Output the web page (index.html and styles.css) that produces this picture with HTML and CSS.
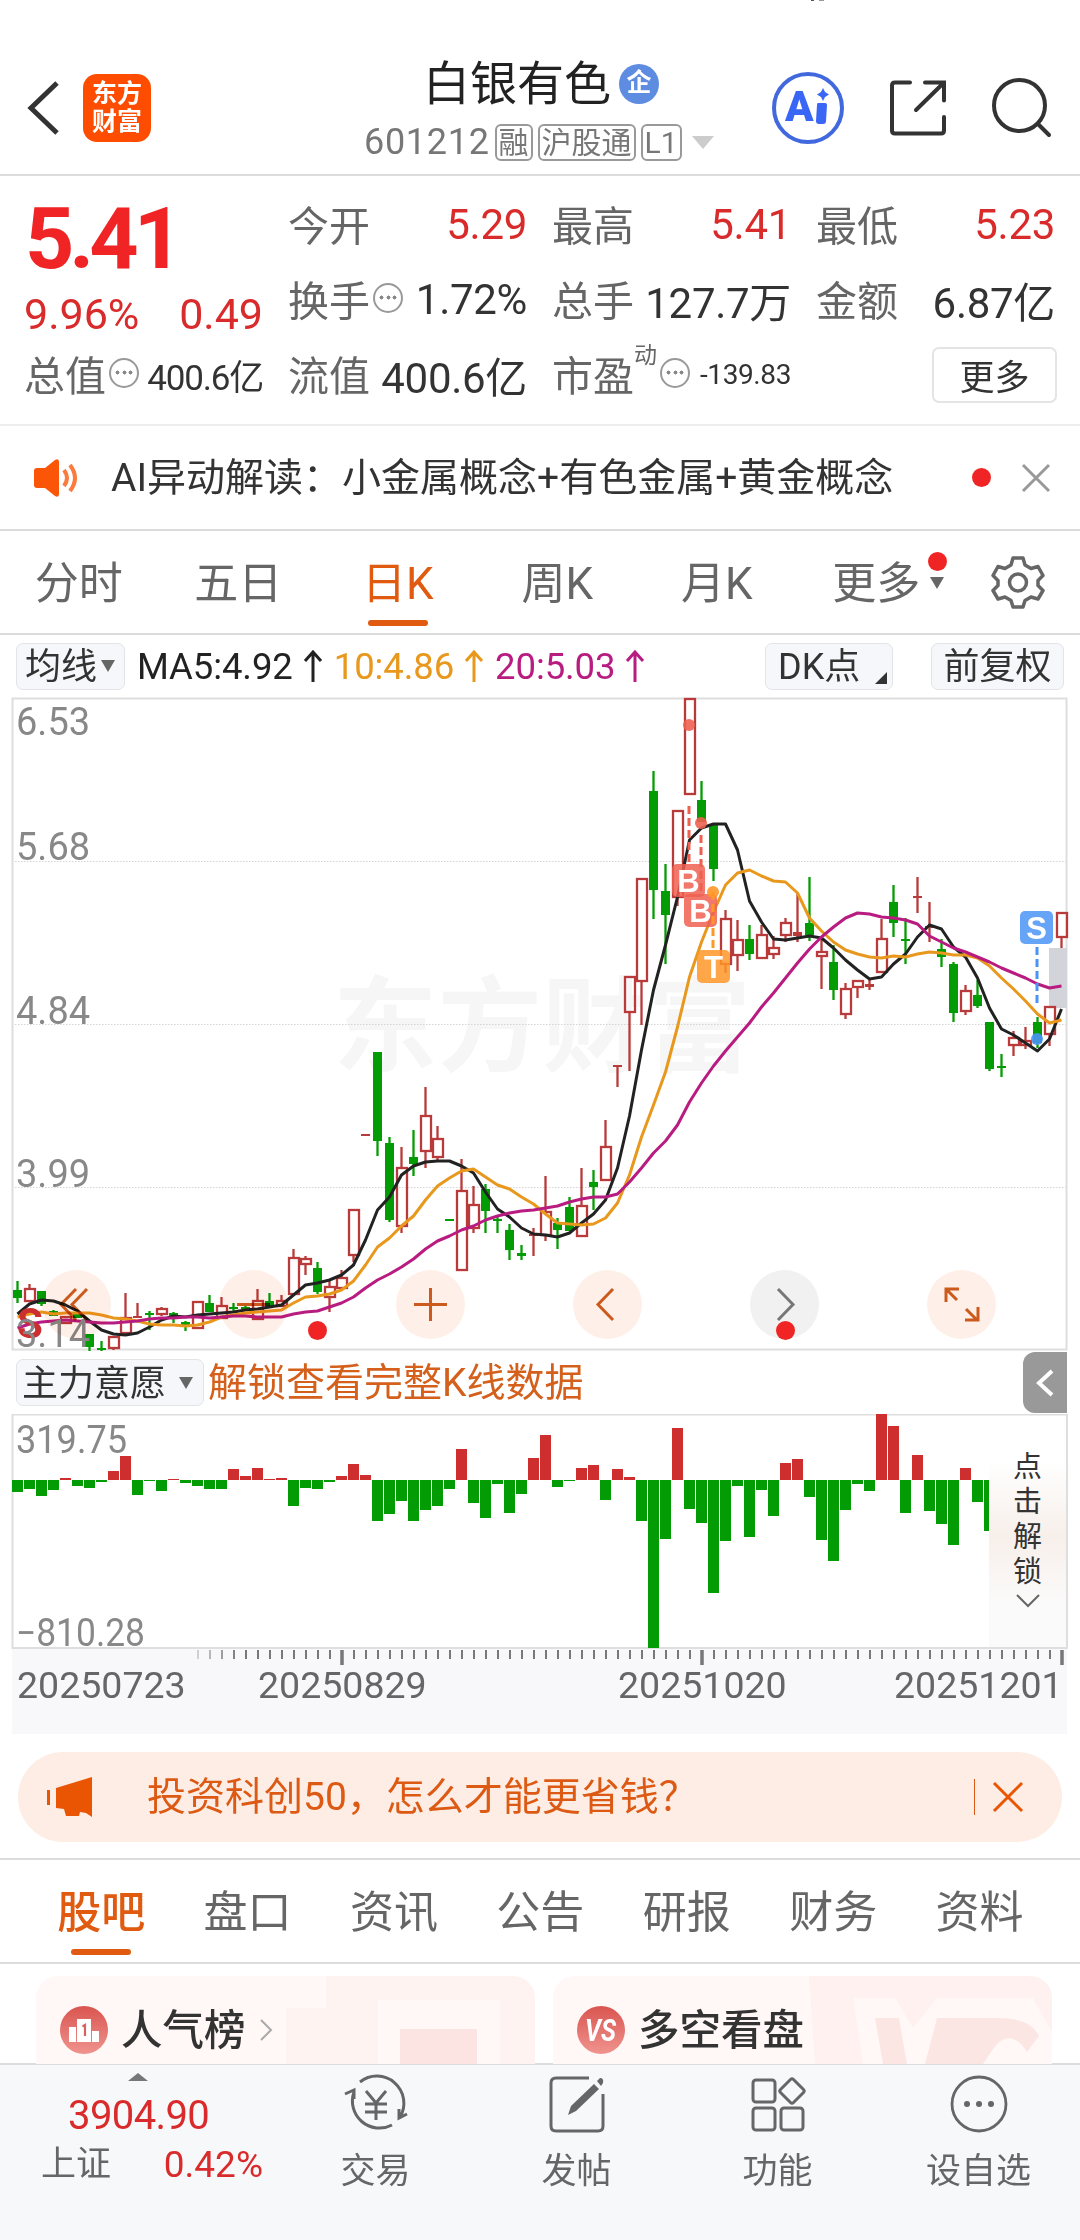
FILE: index.html
```
<!DOCTYPE html>
<html lang="zh-CN">
<head>
    <meta charset="UTF-8">
    <meta name="viewport" content="width=device-width, initial-scale=1.0">
    <title>白银有色 601212</title>
    <link rel="stylesheet" href="styles.css">
</head>
<body>

<header class="header">
    <i class="status-mark"></i>
    <div class="header-left">
        <svg width="32" height="56" viewBox="0 0 32 56"><path d="M30 3 4 28 30 53" fill="none" stroke="#333" stroke-width="5"/></svg>
        <div class="logo"><span>东方</span><span>财富</span></div>
    </div>
    <div class="header-title">
        <div class="name"><span>白银有色</span><span class="badge">企</span></div>
        <div class="code">601212<span class="tag">融</span><span class="tag">沪股通</span><span class="tag">L1</span><i class="tri tri-light"></i></div>
    </div>
    <div class="header-icons">
        <svg width="72" height="72" viewBox="0 0 72 72">
            <circle cx="36" cy="36" r="34" fill="none" stroke="#4169dd" stroke-width="4"/>
            <text x="13" y="49" class="ai-text">A</text>
            <path d="M46 31h7q2 0 2 2l-1 16q0 3-3 3h-4q-3 0-3-3l1-16q0-2 1-2z" fill="#3a66f5"/>
            <path d="M51 16l2 4 4 2.500-4 2.500-2 4-2-4-4-2.500 4-2.500z" fill="#3a66f5"/>
        </svg>
        <svg width="60" height="60" viewBox="0 0 60 60" fill="none" stroke="#333" stroke-width="4" stroke-linecap="round">
            <path d="M22 4.500H7q-3 0-3 3v45q0 3 3 3h46q3 0 3-3V39M37 4.500h19v18M55 5.500 28 32"/>
        </svg>
        <svg width="60" height="60" viewBox="0 0 60 60" fill="none" stroke="#333" stroke-width="4" stroke-linecap="round">
            <circle cx="27.500" cy="27.500" r="25.500"/><path d="M46 46 57 57"/>
        </svg>
    </div>
</header>

<section class="quote">
    <div class="quote-price">
        <div class="price">5.41</div>
        <div class="change"><span>9.96%</span><span>0.49</span></div>
    </div>
    <div class="cell"><label>今开</label><b class="up">5.29</b></div>
    <div class="cell"><label>最高</label><b class="up">5.41</b></div>
    <div class="cell"><label>最低</label><b class="up">5.23</b></div>
    <div class="cell"><label>换手<i class="info"></i></label><b>1.72%</b></div>
    <div class="cell"><label>总手</label><b>127.7万</b></div>
    <div class="cell"><label>金额</label><b>6.87亿</b></div>
    <div class="cell"><label>总值<i class="info"></i></label><b class="mid">400.6亿</b></div>
    <div class="cell"><label>流值</label><b>400.6亿</b></div>
    <div class="cell"><label>市盈<sup>动</sup><i class="info"></i></label><b class="small">-139.83</b></div>
    <div class="cell cell-more"><button class="more-btn">更多</button></div>
</section>

<section class="news">
    <svg width="46" height="40" viewBox="0 0 46 40">
        <path d="M1 13q0-3 3-3h8L22 2q4-2 4 2v32q0 4-4 2L12 30H4q-3 0-3-3z" fill="#fb5607"/>
        <path d="M31 12q6 8 0 16M37 7q10 13 0 26" fill="none" stroke="#fb7a3c" stroke-width="4"/>
    </svg>
    <p>AI异动解读：小金属概念+有色金属+黄金概念</p>
    <i class="dot"></i>
    <svg width="30" height="30" viewBox="0 0 30 30"><path d="M2 2 28 28M28 2 2 28" stroke="#999" stroke-width="3"/></svg>
</section>

<nav class="tabs">
    <a>分时</a>
    <a>五日</a>
    <a class="active">日K</a>
    <a>周K</a>
    <a>月K</a>
    <a class="tab-more">更多<span class="tab-mark"><i class="dot"></i><i class="tri"></i></span></a>
    <svg width="54" height="54" viewBox="0 0 54 54" fill="none" stroke="#666" stroke-width="3.500" stroke-linejoin="round">
        <path d="M22 3h10l2 7 6 3.500 7-2 5 9-5 5v5l5 5-5 8.500-7-2-6 3.500-2 6.500H22l-2-6.500-6-3.500-7 2-5-8.500 5-5v-5l-5-5 5-9 7 2 6-3.500z"/>
        <circle cx="27" cy="27.500" r="8.500"/>
    </svg>
</nav>

<div class="ma-bar">
    <button class="chip chip-ma">均线<i class="tri"></i></button>
    <span class="ma ma5">MA5:4.92<svg width="20" height="32" viewBox="0 0 20 32"><path d="M10 32V2M2 11l8-9 8 9"/></svg></span>
    <span class="ma ma10">10:4.86<svg width="20" height="32" viewBox="0 0 20 32"><path d="M10 32V2M2 11l8-9 8 9"/></svg></span>
    <span class="ma ma20">20:5.03<svg width="20" height="32" viewBox="0 0 20 32"><path d="M10 32V2M2 11l8-9 8 9"/></svg></span>
    <button class="chip chip-dk">DK点<i class="corner"></i></button>
    <button class="chip chip-fq">前复权</button>
</div>

<div class="kline">
    <svg id="kline" width="1080" height="654" viewBox="0 697 1080 654">
        <text x="333" y="1064" class="watermark" textLength="418">东方财富</text>
        <g id="grid"></g>
        <rect x="12.500" y="698.500" width="1054" height="651" class="frame"/>
        <rect x="1049" y="948" width="18" height="60" fill="#d2d4da"/>
        <g id="candles"></g>
        <g id="lines"></g>
        <g id="marks"></g>
        <text x="17" y="1338" class="s-mark">S</text>
        <text x="16" y="735" class="axis">6.53</text>
        <text x="16" y="860" class="axis">5.68</text>
        <text x="16" y="1024" class="axis">4.84</text>
        <text x="16" y="1187" class="axis">3.99</text>
        <text x="16" y="1347" class="axis">3.14</text>
    </svg>
    <div class="chart-tools">
        <span class="tool"><svg viewBox="0 0 69 69"><path d="M34 19 19 34.500 34 50M45 19 30 34.500 45 50"/></svg></span>
        <span class="tool"><svg viewBox="0 0 69 69"><path d="M18 34.500h33"/></svg><i class="dot dot-out"></i></span>
        <span class="tool"><svg viewBox="0 0 69 69"><path d="M18 34.500h33M34.500 18v33"/></svg></span>
        <span class="tool"><svg viewBox="0 0 69 69"><path d="M40 19 25 34.500 40 50"/></svg></span>
        <span class="tool tool-off"><svg viewBox="0 0 69 69"><path d="M28 19 43 34.500 28 50"/></svg><i class="dot dot-in"></i></span>
        <span class="tool"><svg viewBox="0 0 69 69"><path d="M19 32V19h13M19 19l11 11M51 37v13H38M50 50 39 39"/></svg></span>
    </div>
</div>

<div class="sub-bar">
    <button class="chip chip-main">主力意愿<i class="tri"></i></button>
    <span class="unlock-tip">解锁查看完整K线数据</span>
    <span class="drawer"><svg width="20" height="30" viewBox="0 0 20 30"><path d="M17 3 4 15l13 12" fill="none" stroke="#fff" stroke-width="4"/></svg></span>
</div>

<div class="volume">
    <svg id="volume" width="1080" height="320" viewBox="0 1414 1080 320">
        <rect x="12" y="1649" width="1055" height="85" fill="#f8f8fa"/>
        <path d="M12.500 1648V1414.500H1067V1648z" class="frame"/>
        <g id="bars"></g>
        <g id="ticks"></g>
        <text x="16" y="1453" class="axis" textLength="111" lengthAdjust="spacingAndGlyphs">319.75</text>
        <text x="16" y="1646" class="axis" textLength="129" lengthAdjust="spacingAndGlyphs">−810.28</text>
        <text x="17" y="1698" class="date">20250723</text>
        <text x="258" y="1698" class="date">20250829</text>
        <text x="618" y="1698" class="date">20251020</text>
        <text x="894" y="1698" class="date">20251201</text>
    </svg>
    <div class="unlock">
        <span>点击解锁</span>
        <svg width="24" height="14" viewBox="0 0 24 14"><path d="M1 1l11 11L23 1" fill="none" stroke="#666" stroke-width="2"/></svg>
    </div>
</div>

<div class="banner">
    <svg width="48" height="42" viewBox="0 0 48 42" fill="#ea5504">
        <path d="M1 14h3v15H1zM10 12 46 1v40l-6-4-6-1-1 4H20l-2-7-8-1z"/>
    </svg>
    <p>投资科创50，怎么才能更省钱？</p>
    <i class="line"></i>
    <svg width="32" height="32" viewBox="0 0 32 32"><path d="M2 2 30 30M30 2 2 30" stroke="#ea5504" stroke-width="3"/></svg>
</div>

<nav class="tabs tabs-info">
    <a class="active">股吧</a>
    <a>盘口</a>
    <a>资讯</a>
    <a>公告</a>
    <a>研报</a>
    <a>财务</a>
    <a>资料</a>
</nav>

<section class="cards">
    <div class="card">
        <svg class="card-bg" width="499" height="88" viewBox="0 0 499 88">
            <path d="M290 0h209v88H250V32h40z" fill="#fef3f1"/>
            <path d="M342 24h122v64H342z" fill="#fff8f6"/>
            <path d="M364 53h77v35h-77z" fill="#fce4e2"/>
        </svg>
        <svg width="48" height="48" viewBox="0 0 48 48">
            <defs><linearGradient id="rg" x1="0" y1="0" x2="0" y2="1"><stop offset="0" stop-color="#d95550"/><stop offset="1" stop-color="#f0938e"/></linearGradient></defs>
            <circle cx="24" cy="24" r="24" fill="url(#rg)"/>
            <path d="M9 21h7v15H9zM17 13h14v23H17zM32 25h7v11h-7z" fill="#fff"/>
            <path d="M22.500 20.500 25 19v11" fill="none" stroke="#d9625d" stroke-width="2.200"/>
        </svg>
        <b>人气榜</b>
        <svg width="14" height="24" viewBox="0 0 14 24"><path d="M2 2l10 10L2 22" fill="none" stroke="#aaa" stroke-width="2"/></svg>
    </div>
    <div class="card">
        <svg class="card-bg" width="499" height="88" viewBox="0 0 499 88">
            <path d="M256 0h243v88H262z" fill="#fef1ef"/>
            <path d="M300 22h42l18 30 24-30h96l19 34v32H310z" fill="#fff8f6"/>
            <path d="M322 42h24l8 46h-24zM384 42h60q34 0 42 18l-12 16q-18-28-36 0l-8 12h-58z" fill="#fce6e4"/>
        </svg>
        <svg width="48" height="48" viewBox="0 0 48 48">
            <circle cx="24" cy="24" r="24" fill="url(#rg)"/>
            <text x="8" y="35" class="vs" textLength="31" lengthAdjust="spacingAndGlyphs">VS</text>
        </svg>
        <b>多空看盘</b>
    </div>
</section>

<footer class="bottom">
    <div class="index">
        <i class="tri-up"></i>
        <div class="index-num">3904.90</div>
        <div class="index-row"><span>上证</span><span class="up">0.42%</span></div>
    </div>
    <div class="nav-item">
        <svg width="66" height="60" viewBox="0 0 66 60" fill="none" stroke="#666" stroke-width="3">
            <path d="M17 8A27 27 0 0 1 57 43M49 51A27 27 0 0 1 11 18M2 20l9-4v9M64 40l-8 4v-9"/>
            <path d="M23 17l10 12 10-12M33 29v17M22 30h22M22 38h22"/>
        </svg>
        <span>交易</span>
    </div>
    <div class="nav-item">
        <svg width="60" height="60" viewBox="0 0 60 60" fill="none" stroke="#666" stroke-width="3">
            <path d="M42 4H9Q4 4 4 9v43q0 5 5 5h42q5 0 5-5V20"/>
            <path d="M47 10l5 5L29 37l-8 4 3-9zM50 7l3-3q4 0 3 5l-2 3z" fill="#666" stroke="none"/>
        </svg>
        <span>发帖</span>
    </div>
    <div class="nav-item">
        <svg width="60" height="60" viewBox="0 0 60 60" fill="none" stroke="#666" stroke-width="3">
            <rect x="5" y="6" width="22" height="22" rx="3"/>
            <rect x="5" y="34" width="22" height="22" rx="3"/>
            <rect x="33" y="34" width="22" height="22" rx="3"/>
            <path d="M42.500 5.500q1.500-1.500 3 0l10 10q1.500 1.500 0 3l-10 10q-1.500 1.500-3 0l-10-10q-1.500-1.500 0-3z"/>
        </svg>
        <span>功能</span>
    </div>
    <div class="nav-item">
        <svg width="60" height="60" viewBox="0 0 60 60">
            <circle cx="30" cy="30" r="27" fill="none" stroke="#666" stroke-width="2.800"/>
            <circle cx="18" cy="30" r="3" fill="#666"/><circle cx="30" cy="30" r="3" fill="#666"/><circle cx="42" cy="30" r="3" fill="#666"/>
        </svg>
        <span>设自选</span>
    </div>
</footer>

<script src="chart.js"></script>
</body>
</html>
```
FILE: styles.css
```
* {
    box-sizing: border-box;
}

body {
    margin: 0;
    width: 1080px;
    height: 2240px;
    overflow: hidden;
    background: #fff;
    color: #333;
    font-family: Roboto, "Noto Sans CJK SC", sans-serif;
}

svg {
    display: block;
    flex: none;
}

p {
    margin: 0;
}

button {
    font-family: inherit;
    color: #333;
    padding: 0;
}

.up {
    color: #d92b2b !important;
}

.dot {
    display: block;
    width: 19px;
    height: 19px;
    border-radius: 50%;
    background: #f02424;
    flex: none;
}

.tri {
    display: block;
    border: 7px solid transparent;
    border-top: 12px solid #666;
    border-bottom: 0;
}

/* header */
.header {
    position: relative;
    height: 176px;
    padding: 42px 28px 0 27px;
    display: flex;
    align-items: center;
    border-bottom: 2px solid #dcdcdc;
}

.status-mark {
    position: absolute;
    left: 811px;
    top: 0;
    width: 13px;
    height: 1px;
    border-left: 3px solid #555;
    border-right: 5px solid #999;
}

.header-left {
    display: flex;
    align-items: center;
    gap: 24px;
    width: 337px;
}

.logo {
    width: 68px;
    height: 68px;
    border-radius: 14px;
    background: #fe4d01;
    color: #fff;
    font-size: 25px;
    font-weight: 700;
    line-height: 28px;
    display: flex;
    flex-direction: column;
    align-items: center;
    justify-content: center;
}

.header-title {
    width: 350px;
    margin-top: 2px;
}

.name {
    display: flex;
    align-items: center;
    justify-content: center;
    gap: 8px;
    height: 66px;
    font-size: 47px;
    color: #222;
    margin-left: 4px;
    white-space: nowrap;
}

.name > span:first-child {
    padding-bottom: 4px;
}

.badge {
    width: 40px;
    height: 40px;
    margin-top: 5px;
    border-radius: 50%;
    background: #5e8ce0;
    color: #fff;
    font-size: 25px;
    font-weight: 700;
    line-height: 38px;
    text-align: center;
}

.code {
    display: flex;
    align-items: center;
    height: 56px;
    font-size: 36px;
    color: #777;
    letter-spacing: .7px;
    white-space: nowrap;
}

.tag {
    flex: none;
    height: 37px;
    margin-left: 5px;
    padding: 0 2px;
    border: 2px solid #999;
    border-radius: 6px;
    font-size: 30px;
    line-height: 33px;
    letter-spacing: 0;
}

.tri-light {
    border-width: 13px 11px 0;
    border-color: #ccc transparent transparent;
    margin-left: 10px;
}

.header-icons {
    display: flex;
    align-items: center;
    gap: 44px;
    margin-left: auto;
}

.ai-text {
    font: 900 42px Roboto, sans-serif;
    fill: #3a66f5;
}

/* quote */
.quote {
    height: 250px;
    padding: 12px 25px 0;
    display: grid;
    grid-template-columns: repeat(4, 238px);
    grid-template-rows: repeat(3, 75px);
    column-gap: 26px;
    border-bottom: 2px solid #eee;
}

.quote-price {
    grid-row: span 2;
}

.price {
    height: 101px;
    line-height: 101px;
    font-size: 86px;
    font-weight: 700;
    color: #f02424;
    letter-spacing: -5px;
}

.change {
    display: flex;
    justify-content: space-between;
    height: 50px;
    line-height: 50px;
    font-size: 43px;
    color: #d92b2b;
    margin-left: -1px;
}

.cell {
    display: flex;
    align-items: center;
    justify-content: space-between;
    white-space: nowrap;
}

.cell label {
    display: flex;
    align-items: center;
    margin-left: -1px;
    padding-bottom: 6px;
    font-size: 41px;
    color: #666;
}

.cell b {
    font-size: 42px;
    font-weight: 400;
    letter-spacing: -.3px;
    padding-bottom: 2px;
}

.cell .mid {
    font-size: 35px;
    letter-spacing: -1.2px;
}

.cell .small {
    font-size: 28px;
    letter-spacing: -.4px;
}

.cell sup {
    font-size: 23px;
    line-height: 23px;
    margin-top: -34px;
}

.info {
    width: 30px;
    height: 30px;
    margin-left: 3px;
    border: 2px solid #999;
    border-radius: 50%;
    background: radial-gradient(circle, #888 1.8px, transparent 2.2px) 50% 50% / 7px 7px no-repeat,
        radial-gradient(circle, #888 1.8px, transparent 2.2px) 15% 50% / 7px 7px no-repeat,
        radial-gradient(circle, #888 1.8px, transparent 2.2px) 85% 50% / 7px 7px no-repeat;
}

.cell-more {
    justify-content: flex-end;
}

.more-btn {
    width: 125px;
    height: 56px;
    margin: 0 -2px 2px 0;
    padding-bottom: 7px;
    border: 2px solid #e4e4e4;
    border-radius: 7px;
    background: #fff;
    font-size: 35px;
}

/* news */
.news {
    display: flex;
    align-items: center;
    height: 105px;
    padding: 0 29px 0 33px;
    border-bottom: 2px solid #dcdcdc;
}

.news p {
    flex: 1;
    margin-left: 32px;
    padding-bottom: 8px;
    font-size: 39px;
}

.news .dot {
    margin-right: 30px;
}

/* tabs */
.tabs {
    display: flex;
    align-items: center;
    height: 104px;
    border-bottom: 2px solid #dcdcdc;
}

.tabs a {
    position: relative;
    width: 159.5px;
    height: 102px;
    line-height: 106px;
    font-size: 44px;
    color: #666;
    text-align: center;
    left: -1px;
}

.tabs a.active {
    color: #e05a10;
}

.tabs a.active::after {
    content: "";
    position: absolute;
    left: 50%;
    bottom: 7px;
    width: 60px;
    height: 6px;
    margin-left: -30px;
    border-radius: 3px;
    background: #e05a10;
}

.tabs svg {
    margin-left: 34px;
}

.tab-mark {
    position: absolute;
    left: 131px;
    top: 21px;
    display: flex;
    flex-direction: column;
    align-items: center;
    gap: 6px;
}

.tabs-info {
    padding: 0 28px;
    border-top: 2px solid #dcdcdc;
    height: 106px;
}

.tabs-info a {
    width: 146.4px;
    flex: none;
    left: 0;
}

.tabs-info a.active {
    font-weight: 500;
}

/* moving average row */
.ma-bar {
    display: flex;
    align-items: center;
    height: 62px;
    padding: 0 16px;
}

.chip {
    display: flex;
    align-items: center;
    height: 47px;
    padding-bottom: 6px;
    border: 1.5px solid #e3e4e8;
    border-radius: 7px;
    background: #f6f7fa;
    font-size: 36px;
    white-space: nowrap;
}

.chip .tri {
    position: relative;
    top: 3px;
}

.chip-ma {
    width: 109px;
    padding-left: 8px;
    gap: 4px;
}

.chip-dk {
    position: relative;
    width: 128px;
    padding-left: 12px;
    margin-left: auto;
    margin-right: 38px;
}

.chip-fq {
    width: 133px;
    justify-content: center;
}

.corner {
    position: absolute;
    right: 5px;
    bottom: 5px;
    border-left: 12px solid transparent;
    border-bottom: 12px solid #333;
}

.ma {
    display: flex;
    align-items: center;
    gap: 10px;
    margin-left: 11px;
    font-size: 36.500px;
    letter-spacing: -.1px;
    color: #222;
}

.ma5 {
    margin-left: 12px;
}

.ma svg {
    fill: none;
    stroke: currentColor;
    stroke-width: 3;
}

.ma10 {
    color: #e8981c;
}

.ma20 {
    color: #b81c80;
}

/* k line */
.kline {
    position: relative;
}

.kline svg {
    overflow: visible;
}

.frame {
    fill: none;
    stroke: #dedede;
    stroke-width: 2;
}

.watermark {
    font-size: 104px;
    font-weight: 700;
    fill: #f6f6f6;
}

.axis {
    font-size: 38px;
    fill: #888;
}

.date {
    font-size: 37.500px;
    fill: #666;
}

.s-mark {
    font-size: 42px;
    font-weight: 700;
    fill: #cc2f2f;
}

.mark-text {
    font: 700 31px "Liberation Sans", sans-serif;
    fill: #fff;
    text-anchor: middle;
}

.chart-tools {
    position: absolute;
    left: 42px;
    bottom: 12px;
    display: flex;
    gap: 108px;
    mix-blend-mode: multiply;
}

.tool {
    position: relative;
    width: 69px;
    height: 69px;
    border-radius: 50%;
    background: #fef0e9;
}

.tool svg {
    fill: none;
    stroke: #cc5a1c;
    stroke-width: 3;
}

.tool-off {
    background: #f1f1f1;
}

.tool-off svg {
    stroke: #777;
}

.tool .dot {
    position: absolute;
}

.dot-out {
    left: 89px;
    top: 51px;
}

.dot-in {
    left: 26px;
    top: 51px;
}

/* sub chart */
.sub-bar {
    display: flex;
    align-items: center;
    height: 63px;
    padding: 0 13px 0 16px;
}

.chip-main {
    width: 188px;
    padding-left: 5px;
    gap: 13px;
}

.unlock-tip {
    flex: 1;
    margin-left: 4px;
    padding-bottom: 7px;
    font-size: 39px;
    color: #d4601c;
}

.drawer {
    display: flex;
    align-items: center;
    justify-content: center;
    width: 44px;
    height: 61px;
    border-radius: 12px 0 0 12px;
    background: #999;
}

.volume {
    position: relative;
    height: 320px;
}

.unlock {
    position: absolute;
    left: 989px;
    top: 2px;
    width: 77px;
    height: 231px;
    padding-top: 34px;
    display: flex;
    flex-direction: column;
    align-items: center;
    background: linear-gradient(#fff 20%, #f7efea 52%, #fbfafa 80%);
    color: #333;
    font-size: 29px;
}

.unlock span {
    width: 29px;
    line-height: 35px;
    word-break: break-all;
}

.unlock svg {
    margin-top: 4px;
}

/* banner */
.banner {
    display: flex;
    align-items: center;
    height: 90px;
    margin: 18px 18px 16px;
    padding: 0 38px 0 28px;
    border-radius: 45px;
    background: #fdede4;
    color: #dc5a14;
}

.banner p {
    flex: 1;
    margin-left: 53px;
    padding-bottom: 8px;
    font-size: 39px;
}

.banner .line {
    width: 1px;
    height: 36px;
    margin-right: 17px;
    background: #dc5a14;
}

/* cards */
.cards {
    display: flex;
    gap: 18px;
    height: 99px;
    padding: 12px 27px 0 36px;
}

.card {
    position: relative;
    display: flex;
    align-items: center;
    width: 499px;
    height: 88px;
    padding: 20px 0 0 24px;
    border-radius: 22px 22px 0 0;
    background: #fff8f6;
    overflow: hidden;
}

.card > * {
    position: relative;
}

.card .card-bg {
    position: absolute;
    left: 0;
    top: 0;
}

.card b {
    margin: 0 13px;
    padding-bottom: 6px;
    font-size: 41.500px;
    font-weight: 500;
}

.vs {
    font: italic 700 31px Roboto, sans-serif;
    fill: #fff;
}

/* bottom bar */
.bottom {
    display: flex;
    height: 177px;
    background: #f7f8fa;
    border-top: 2px solid #dcdcdc;
    color: #666;
    font-size: 35px;
}

.index {
    width: 275px;
}

.tri-up {
    display: block;
    width: 0;
    margin: 8px 0 0 128px;
    border: 10px solid transparent;
    border-top: 0;
    border-bottom: 8px solid #777;
}

.index-num {
    margin: 10px 0 0 68px;
    height: 50px;
    line-height: 50px;
    font-size: 40px;
    letter-spacing: -.6px;
    color: #d92b2b;
}

.index-row {
    display: flex;
    justify-content: space-between;
    padding: 0 12px 0 41px;
    height: 48px;
    line-height: 48px;
}

.index-row .up {
    font-size: 37px;
}

.nav-item {
    width: 201px;
    padding-top: 9px;
    display: flex;
    flex-direction: column;
    align-items: center;
    gap: 14px;
}

.nav-item span {
    line-height: 48px;
}
```
FILE: chart.js
```
const UP = '#b93a3a';
const DOWN = '#049c04';
const STEP = 12;
const X0 = 17.5;

function add(id, html) {
    document.getElementById(id).innerHTML += html;
}

// high, body top, body bottom, low, color (r = hollow, f = filled red, g = green)
const candles = [
    [1281, 1290, 1298, 1303, 'g'], [1284, 1289, 1301, 1301, 'r'], [1291, 1291, 1304, 1306, 'g'],
    [1310, 1311, 1316, 1316, 'g'], [1317, 1317, 1323, 1323, 'r'], [1312, 1313, 1318, 1318, 'g'],
    [1334, 1334, 1347, 1351, 'g'], [1341, 1348, 1349, 1351, 'g'], [1337, 1337, 1348, 1350, 'r'],
    [1293, 1318, 1333, 1333, 'r'], [1303, 1316, 1317, 1317, 'r'], [1311, 1313, 1314, 1330, 'g'],
    [1307, 1309, 1314, 1316, 'r'], [1312, 1313, 1317, 1323, 'g'], [1321, 1322, 1326, 1331, 'g'],
    [1302, 1302, 1328, 1328, 'r'], [1295, 1303, 1312, 1312, 'g'], [1297, 1306, 1318, 1318, 'r'],
    [1303, 1307, 1308, 1311, 'g'], [1306, 1307, 1309, 1310, 'g'], [1289, 1301, 1319, 1320, 'r'],
    [1293, 1301, 1307, 1307, 'g'], [1295, 1301, 1306, 1306, 'r'], [1249, 1258, 1294, 1294, 'r'],
    [1256, 1259, 1264, 1275, 'r'], [1262, 1268, 1292, 1294, 'g'], [1281, 1287, 1297, 1312, 'r'],
    [1270, 1278, 1288, 1288, 'r'], [1210, 1210, 1255, 1262, 'r'], [1134, 1134, 1135, 1135, 'r'],
    [1052, 1052, 1141, 1156, 'g'], [1137, 1143, 1220, 1222, 'g'], [1147, 1168, 1226, 1233, 'r'],
    [1130, 1157, 1164, 1176, 'g'], [1087, 1116, 1151, 1168, 'r'], [1126, 1139, 1157, 1160, 'r'],
    [1219, 1219, 1220, 1220, 'g'], [1159, 1191, 1270, 1270, 'r'], [1186, 1205, 1228, 1233, 'r'],
    [1184, 1189, 1211, 1233, 'g'], [1217, 1219, 1220, 1233, 'g'], [1224, 1230, 1250, 1260, 'g'],
    [1245, 1253, 1256, 1260, 'g'], [1228, 1234, 1235, 1256, 'r'], [1176, 1212, 1235, 1241, 'r'],
    [1218, 1223, 1230, 1249, 'g'], [1197, 1207, 1231, 1231, 'g'], [1168, 1206, 1236, 1236, 'r'],
    [1170, 1182, 1187, 1210, 'g'], [1120, 1147, 1180, 1180, 'r'], [1065, 1065, 1066, 1087, 'r'],
    [977, 977, 1012, 1071, 'r'], [879, 879, 981, 1025, 'r'], [771, 791, 890, 919, 'g'],
    [864, 891, 915, 964, 'g'], [811, 811, 897, 906, 'r'], [699, 699, 794, 794, 'r'],
    [781, 800, 822, 822, 'g'], [824, 824, 869, 881, 'g'], [910, 919, 964, 973, 'r'],
    [920, 940, 955, 971, 'r'], [925, 939, 954, 960, 'g'], [925, 935, 958, 959, 'r'],
    [936, 948, 954, 959, 'r'], [918, 923, 935, 942, 'r'], [893, 932, 936, 942, 'f'],
    [877, 923, 935, 941, 'g'], [938, 952, 956, 989, 'r'], [945, 962, 990, 1000, 'g'],
    [983, 989, 1014, 1019, 'r'], [981, 981, 987, 998, 'r'], [980, 984, 987, 990, 'f'],
    [919, 939, 972, 972, 'r'], [885, 902, 923, 937, 'g'], [918, 939, 940, 964, 'g'],
    [877, 896, 897, 913, 'r'], [902, 926, 927, 942, 'r'], [939, 949, 957, 967, 'g'],
    [962, 964, 1013, 1022, 'g'], [985, 991, 1011, 1015, 'r'], [980, 995, 1006, 1008, 'g'],
    [1022, 1022, 1069, 1071, 'g'], [1054, 1066, 1067, 1077, 'g'], [1031, 1038, 1045, 1056, 'r'],
    [1027, 1041, 1045, 1049, 'r'], [1017, 1022, 1043, 1048, 'g'], [1007, 1007, 1034, 1046, 'r'],
    [913, 913, 937, 948, 'r']
];

let out = '';
candles.forEach(([high, top, bottom, low, type], i) => {
    const x = X0 + i * STEP;
    const color = type === 'g' ? DOWN : UP;
    if (high < top) out += `<path d="M${x} ${high}V${top}" stroke="${color}" stroke-width="2.3"/>`;
    if (low > bottom) out += `<path d="M${x} ${bottom}V${low}" stroke="${color}" stroke-width="2.3"/>`;
    if (bottom - top <= 1) {
        out += `<rect x="${x - 4.5}" y="${top}" width="9" height="2" fill="${color}"/>`;
    } else if (type === 'r') {
        out += `<rect x="${x - 4.5}" y="${top}" width="10" height="${bottom - top}" fill="none" stroke="${color}" stroke-width="2.3"/>`;
    } else {
        out += `<rect x="${x - 4.5}" y="${top}" width="9" height="${bottom - top}" fill="${color}"/>`;
    }
});
add('candles', out);

// dotted price levels
[861, 1024, 1187].forEach(y => {
    add('grid', `<path d="M12 ${y}.5H1067" stroke="#d4d4d4" stroke-dasharray="1.5 1.5"/>`);
});

// averages, one y per day
const averages = {
    '#222': [1314, 1304, 1300, 1301, 1305, 1311, 1321, 1330, 1334, 1335, 1333, 1327, 1320, 1316, 1317, 1315, 1314, 1313, 1312, 1310, 1309, 1307, 1305, 1295, 1285, 1283, 1280, 1275, 1265, 1240, 1210, 1197, 1175, 1166, 1162, 1161, 1161, 1166, 1173, 1192, 1209, 1217, 1228, 1234, 1235, 1237, 1233, 1223, 1214, 1200, 1168, 1116, 1050, 990, 945, 897, 840, 828, 824, 824, 850, 901, 922, 939, 940, 938, 936, 938, 948, 960, 970, 979, 977, 964, 954, 937, 925, 929, 947, 957, 978, 1008, 1029, 1035, 1043, 1051, 1039, 1009],
    '#e8981c': [1317, 1314, 1312, 1314, 1313, 1313, 1313, 1315, 1318, 1319, 1321, 1324, 1325, 1325, 1326, 1325, 1322, 1317, 1315, 1313, 1312, 1311, 1310, 1303, 1297, 1296, 1294, 1290, 1281, 1265, 1247, 1238, 1226, 1216, 1200, 1186, 1178, 1171, 1169, 1177, 1185, 1189, 1197, 1204, 1214, 1223, 1224, 1225, 1224, 1218, 1203, 1175, 1137, 1105, 1072, 1027, 977, 942, 912, 885, 873, 870, 876, 881, 882, 893, 918, 931, 942, 950, 954, 957, 958, 956, 957, 954, 952, 953, 955, 955, 958, 966, 978, 989, 1001, 1014, 1023, 1020],
    '#b81c80': [1328, 1324, 1322, 1321, 1320, 1321, 1322, 1323, 1323, 1322, 1321, 1319, 1318, 1318, 1317, 1317, 1318, 1317, 1316, 1316, 1317, 1317, 1317, 1314, 1312, 1311, 1307, 1303, 1297, 1288, 1280, 1274, 1267, 1259, 1249, 1241, 1236, 1230, 1226, 1220, 1216, 1213, 1211, 1210, 1208, 1206, 1202, 1199, 1197, 1197, 1194, 1182, 1168, 1153, 1141, 1125, 1102, 1083, 1066, 1051, 1037, 1023, 1007, 993, 978, 963, 949, 937, 927, 918, 913, 914, 917, 918, 920, 924, 936, 942, 948, 952, 957, 962, 968, 973, 978, 984, 988, 986]
};
for (const color in averages) {
    const points = averages[color].map((y, i) => `${X0 + i * STEP},${y}`).join(' ');
    add('lines', `<polyline points="${points}" fill="none" stroke="${color}" stroke-width="3" stroke-linejoin="round"/>`);
}

// trade marks: dot, dashed link, label box
function mark(x, dotY, from, to, boxX, boxY, letter, color) {
    add('marks', `<circle cx="${x}" cy="${dotY}" r="6" fill="${color}" opacity=".9"/>
        <path d="M${x} ${from}V${to}" stroke="${color}" stroke-width="3" stroke-dasharray="8 4"/>
        <rect x="${boxX}" y="${boxY}" width="33" height="33" rx="5" fill="${color}" opacity=".85"/>
        <text x="${boxX + 16.5}" y="${boxY + 28}" class="mark-text">${letter}</text>`);
}
mark(689, 725, 806, 864, 672, 864, 'B', '#ee6050');
mark(701, 823, 835, 893, 684, 894, 'B', '#ee6050');
mark(713, 892, 892, 950, 697, 950, 'T', '#ff9628');
mark(1037, 1039, 947, 1004, 1020, 911, 'S', '#4a94f6');

// main force bars, positive is up
const bars = [-12, -9, -16, -10, 2, -6, -8, -2, 9, 24, -15, -1, -11, 1, -3, -6, -9, -9, 11, 4, 12, 1, 2, -26, -8, -9, -2, 4, 16, 5,
    -41, -34, -21, -41, -30, -26, -9, 31, -23, -38, -4, -33, -14, 22, 45, -7, -1, 12, 15, -20, 11, 3, -41, -168, -59, 52, -29, -43, -113, -61,
    -6, -57, -10, -36, 17, 21, -17, -60, -81, -30, -4, -11, 66, 54, -33, 25, -31, -44, -65, 12, -22, -51];
out = '';
bars.forEach((v, i) => {
    out += `<rect x="${12 + i * STEP}" y="${v > 0 ? 1480 - v : 1480}" width="11" height="${Math.abs(v)}" fill="${v > 0 ? '#cf2e2e' : DOWN}"/>`;
});
add('bars', out);

out = '';
for (let x = 198, i = 0; x <= 1062; x += STEP, i++) {
    const big = (x - 342) % 360 === 0;
    out += `<path d="M${x} 1650V${big ? 1665 : 1659}" stroke="#777" stroke-width="${big ? 3.5 : 2}" opacity="${Math.min(1, .3 + i * .2)}"/>`;
}
add('ticks', out);
```
